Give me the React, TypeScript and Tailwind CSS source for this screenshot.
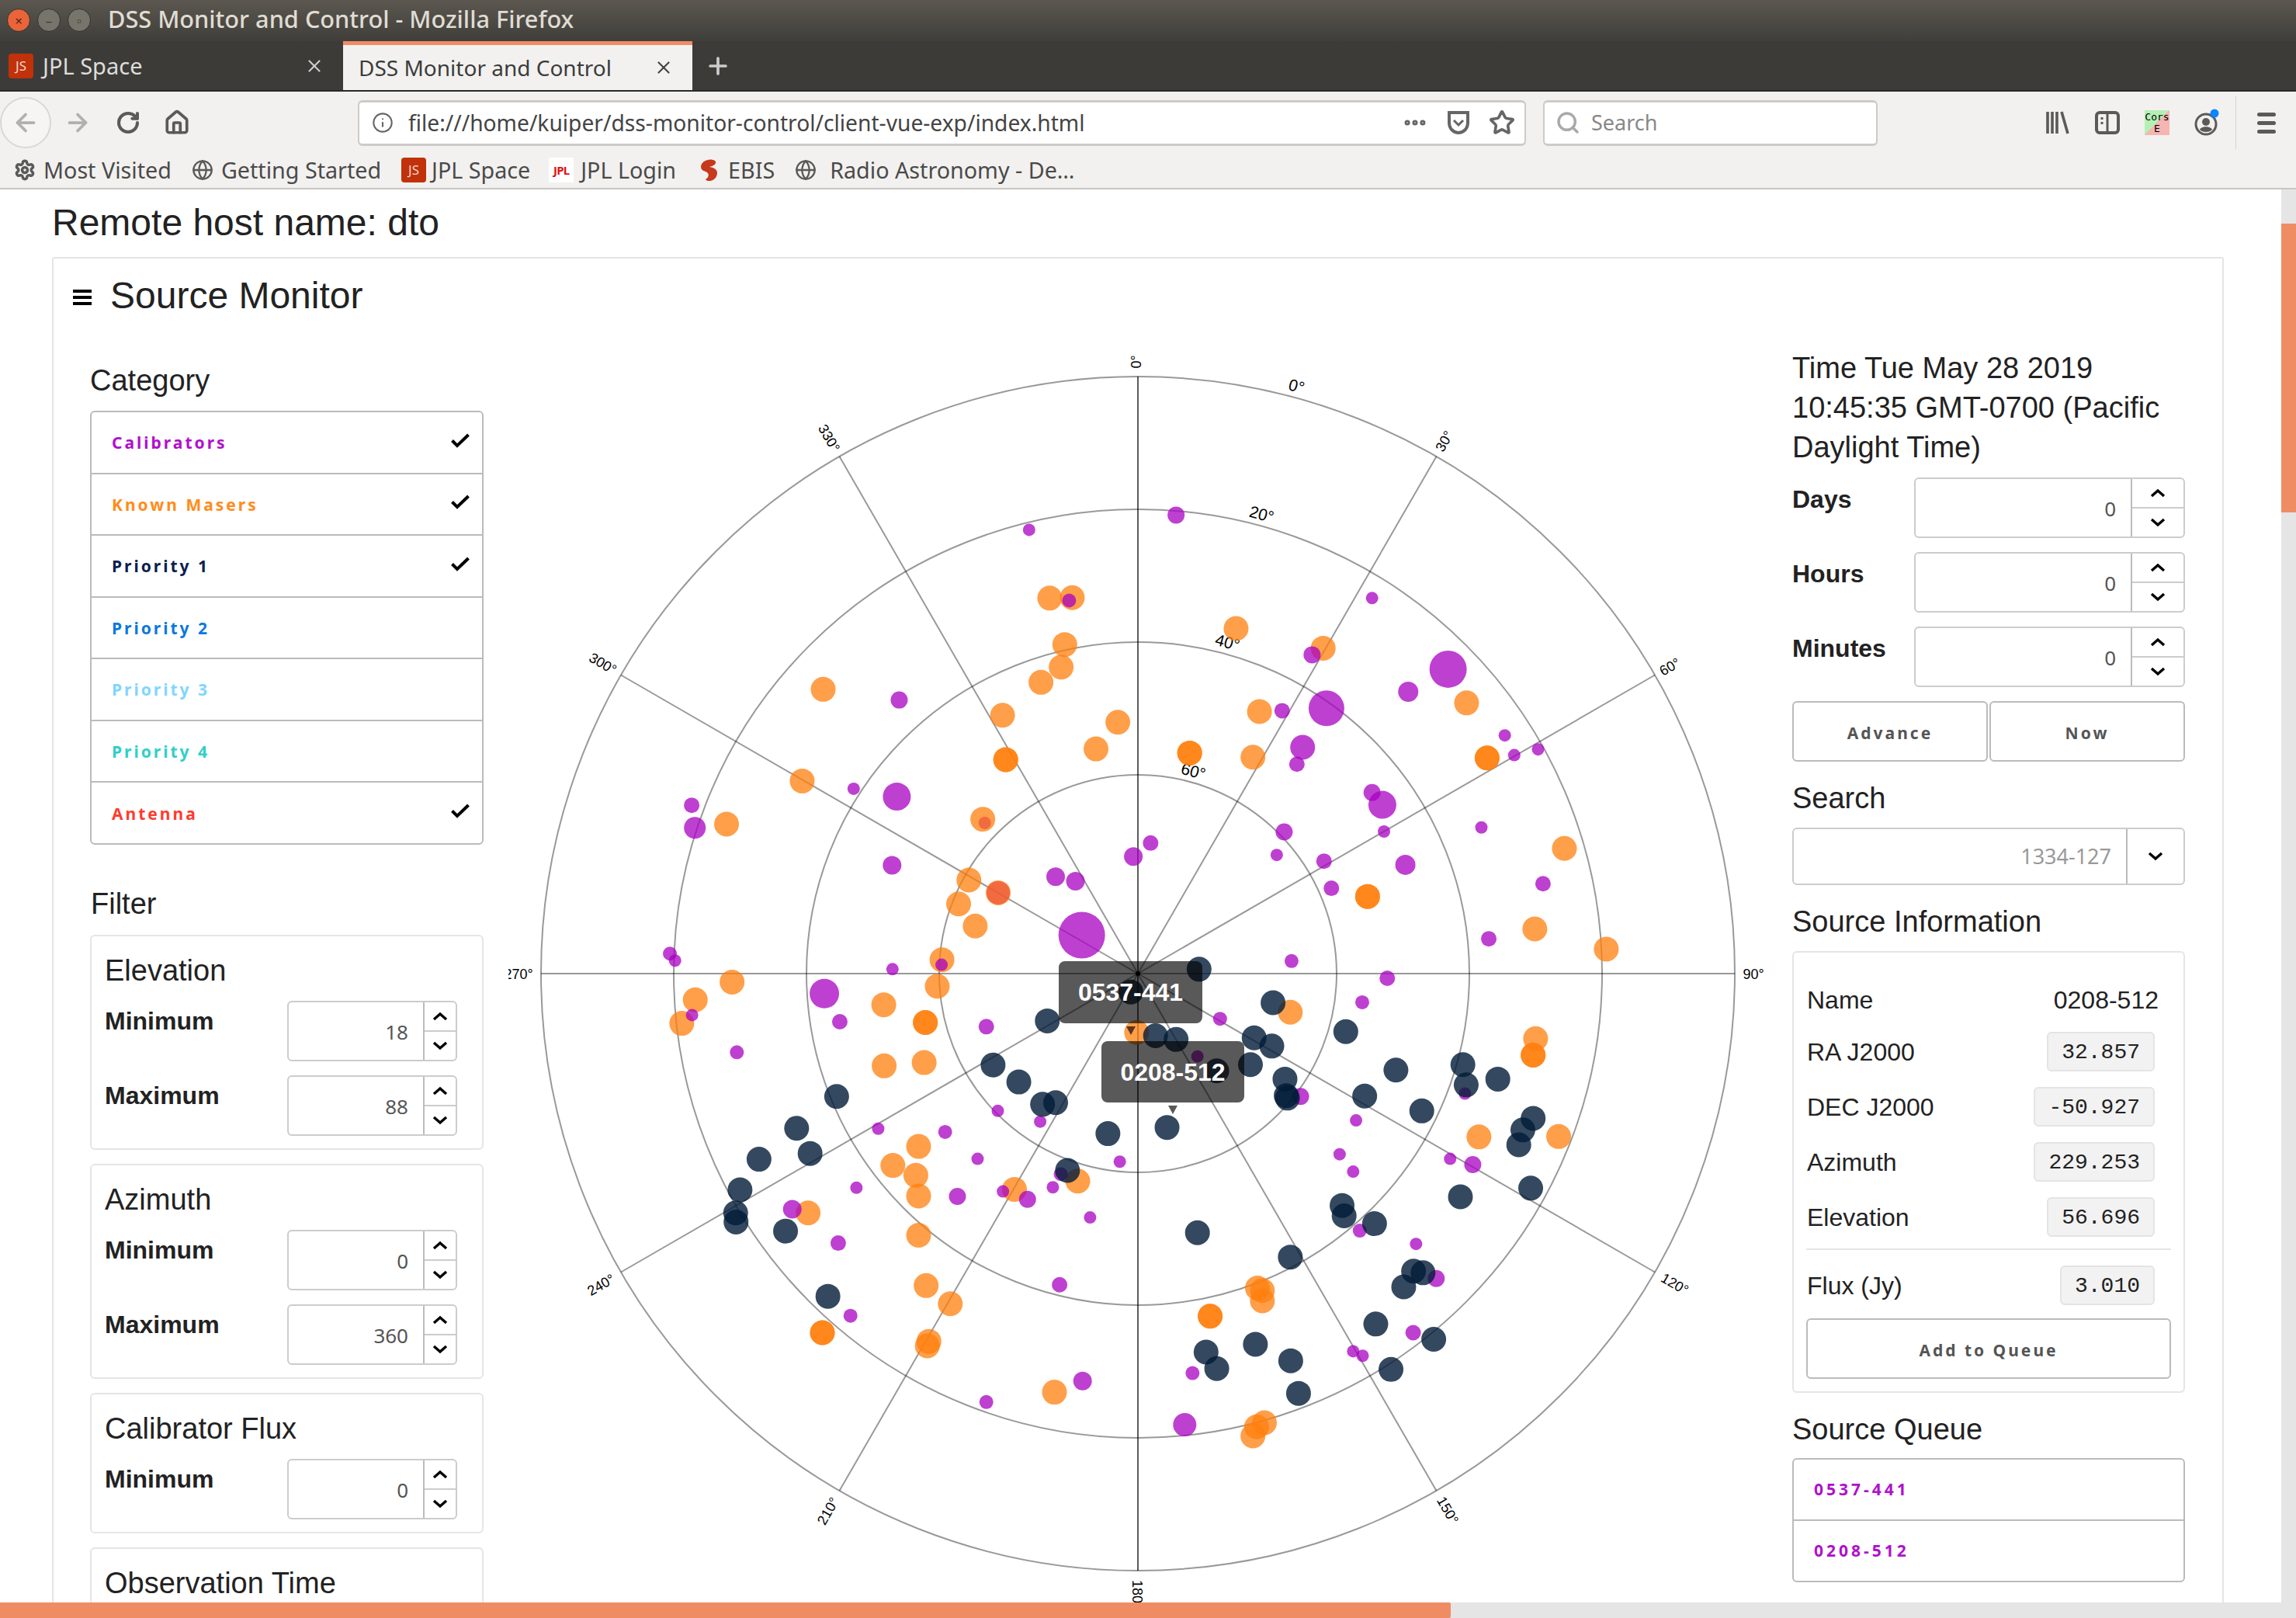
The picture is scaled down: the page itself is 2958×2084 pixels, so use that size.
import React from "react";
import { ArrowLeft, ArrowRight, Globe, Home, Info, MoreHorizontal, Plus, RotateCw, Search, Settings, Star, X } from "lucide-react";

type Dot = [number, number, number];

// dot lists were read off per quadrant, each one has its own origin and scale
const quad = (x0: number, y0: number, sx: number, sy: number, list: Dot[]): Dot[] =>
    list.map(([x, y, r]) => [x0 + x / sx, y0 + y / sy, r] as Dot);

const tl = (l: Dot[]) => quad(660, 440, 1.96, 1.889, l);
const tr = (l: Dot[]) => quad(1440, 440, 1.889, 1.889, l);
const bl = (l: Dot[]) => quad(660, 1250, 1.96, 1.88, l);
const br = (l: Dot[]) => quad(1440, 1250, 1.889, 1.88, l);

const o = (x: number, y: number): Dot => [x, y, 16];
const n = (x: number, y: number): Dot => [x, y, 16];

const orange: Dot[] = [
    ...tl([o(1357,624),o(1414,623),o(1395,737),o(1386,792),o(1335,829),o(1238,909),o(1529,926),o(1474,991),o(1246,1017),o(1246,1017),o(785,846),o(732,1069),o(1188,1162),o(541,1174),o(1153,1310),o(1227,1341),o(1127,1368),o(1169,1422),o(1085,1504)]),
    ...tr([o(288,698),o(500,746),o(849,879),o(345,900),o(175,1001),o(175,1001),o(329,1011),o(899,1013),o(899,1013),o(1087,1233),o(608,1350),o(608,1350),o(1015,1429),o(1189,1478)]),
    ...bl([o(555,28),o(462,71),o(428,128),o(938,83),o(1073,38),o(1043,126),o(1043,126),o(939,231),o(1040,223),o(1026,426),o(961,472),o(1019,496),o(1026,546),o(1268,530),o(1428,510),o(747,587),o(1026,641),o(1045,763),o(1106,807),o(783,877),o(783,877),o(1052,898),o(1048,909),o(1369,1021)]),
    ...br([o(420,101),o(46,150),o(1017,165),o(1011,205),o(1011,205),o(879,403),o(1073,402),o(340,769),o(352,800),o(352,775),o(225,837),o(225,837),o(357,1095),o(338,1105),o(329,1127)]),
];

const red: Dot[] = [
    ...tl([[1193,1171,8],[1227,1341,15]]),
];

const purple: Dot[] = [
    ...tl([[1305,458,8],[1406,630,9],[977,872,11],[862,1088,8],[971,1107,18],[453,1128,10],[461,1183,14],[959,1274,12],[1372,1302,12],[1422,1313,12],[1438,1444,30],[398,1489,9],[411,1506,8],[960,1527,8],[1084,1516,8]]),
    ...tr([[142,422,11],[619,624,8],[473,762,11],[804,797,24],[707,852,13],[400,898,10],[508,892,23],[942,958,8],[450,987,16],[965,1006,8],[1023,992,8],[436,1028,10],[619,1097,11],[644,1127,18],[405,1193,11],[885,1182,8],[648,1192,8],[80,1220,10],[38,1253,12],[387,1249,8],[502,1264,10],[700,1273,13],[1035,1319,10],[520,1330,10],[903,1453,10],[423,1507,9],[656,1549,10]]),
    ...bl([[788,56,19],[454,108,8],[827,124,10],[1197,136,10],[567,198,9],[924,383,8],[1226,340,8],[1333,366,8],[1093,391,9],[1175,456,8],[1534,463,8],[869,526,8],[1124,547,11],[1239,535,8],[1301,554,11],[1365,525,8],[1385,493,9],[707,578,12],[1459,598,8],[823,660,10],[1382,761,10],[854,836,9],[1440,994,12],[1197,1045,9]]),
    ...br([[249,117,9],[194,208,8],[445,305,11],[595,77,9],[580,363,8],[540,445,8],[573,487,8],[809,456,8],[864,470,11],[845,298,8],[726,662,8],[589,630,9],[775,746,11],[719,877,10],[573,922,8],[596,933,8],[182,975,9],[163,1100,15]]),
];

const navy: Dot[] = [
    ...tr([n(198,1527)]),
    ...bl([n(1351,122),n(1214,229),n(1279,270),n(1339,324),n(1372,320),n(819,305),n(1504,395),n(718,382),n(752,443),n(623,457),n(1402,484),n(575,531),n(564,587),n(565,609),n(690,631),n(797,789)]),
    ...br([n(32,52),n(92,158),n(142,167),n(378,78),n(332,163),n(375,183),n(323,228),n(407,263),n(410,303),n(413,309),n(241,243),n(555,148),n(677,241),n(601,304),n(740,340),n(840,228),n(848,277),n(925,263),n(1011,358),n(986,386),n(976,422),n(1005,527),n(834,548),n(120,380),n(546,569),n(551,594),n(625,613),n(194,635),n(420,694),n(720,728),n(743,732),n(696,766),n(628,856),n(769,893),n(665,966),n(335,905),n(215,924),n(241,964),n(421,945),n(440,1024)]),
];

const CX = 1466;
const CY = 1254;

const spokes = [0, 30, 60, 90, 120, 150, 180, 210, 240, 270, 300, 330];

const spokeLabels: [string, number, number, number][] = [
    ["0°", 1465, 466, -90],
    ["30°", 1862, 569, -60],
    ["60°", 2152, 860, -30],
    ["90°", 2259, 1256, 0],
    ["120°", 2157, 1655, 30],
    ["150°", 1864, 1946, 60],
    ["180", 1464, 2050, 90],
    ["210°", 1068, 1947, -60],
    ["240°", 775, 1656, -30],
    ["270°", 668, 1256, 0],
    ["300°", 776, 856, 30],
    ["330°", 1067, 565, 60],
];

const ringLabels: [string, number, number][] = [
    ["0°", 1670, 499],
    ["20°", 1625, 664],
    ["40°", 1581, 829],
    ["60°", 1537, 995],
];

function Dots({ list, fill, opacity }: { list: Dot[]; fill: string; opacity: number }) {
    return (
        <g fill={fill} fillOpacity={opacity}>
            {list.map(([x, y, r], i) => (
                <circle key={i} cx={x} cy={y} r={r} />
            ))}
        </g>
    );
}

function PolarChart() {
    return (
        <svg width="1620" height="1624" viewBox="655 440 1620 1624" className="shrink-0">
            <g fill="none" stroke="#000" strokeOpacity="0.4" strokeWidth="2">
                {[256, 427, 598, 769].map((r) => (
                    <circle key={r} cx={CX} cy={CY} r={r} />
                ))}
                {spokes.map((a) => (
                    <line
                        key={a}
                        x1={CX}
                        y1={CY}
                        x2={CX + 769 * Math.sin((a * Math.PI) / 180)}
                        y2={CY - 769 * Math.cos((a * Math.PI) / 180)}
                    />
                ))}
                <line x1={CX} y1={CY - 769} x2={CX} y2={CY + 769} />
            </g>
            {spokeLabels.map(([t, x, y, a]) => (
                <text key={t} transform={`translate(${x} ${y}) rotate(${a})`} textAnchor="middle" dominantBaseline="middle" fontSize="18" fill="#000">
                    {t}
                </text>
            ))}
            {ringLabels.map(([t, x, y]) => (
                <text key={t} transform={`translate(${x} ${y}) rotate(15)`} textAnchor="middle" dominantBaseline="middle" fontSize="21" fill="#000">
                    {t}
                </text>
            ))}
            <Dots list={orange} fill="#ff7f0e" opacity={0.75} />
            <Dots list={red} fill="#e8483a" opacity={0.6} />
            <Dots list={purple} fill="#a800c2" opacity={0.75} />
            <Dots list={navy} fill="#011b37" opacity={0.8} />
            <circle cx={CX} cy={CY} r="3" fill="#000" />
        </svg>
    );
}

function Tip({ text, className }: { text: string; className: string }) {
    return (
        <div className={"absolute flex items-center justify-center rounded-lg bg-[rgba(0,0,0,0.65)] text-[32px] font-bold text-white " + className}>
            {text}
            <div className="absolute left-1/2 top-full mt-[4px] -ml-[6px] h-0 w-0 border-x-[6px] border-t-[11px] border-x-transparent border-t-[rgba(0,0,0,0.65)]" />
        </div>
    );
}

function Chevron({ up }: { up?: boolean }) {
    return (
        <svg width="20" height="12" viewBox="0 0 20 12">
            <path d={up ? "M2 10L10 3L18 10" : "M2 2L10 9L18 2"} fill="none" stroke="#000" strokeWidth="3.4" />
        </svg>
    );
}

function NumberField({ value, className, spin }: { value: string; className: string; spin: string }) {
    return (
        <div className={"flex h-[78px] rounded-md border-2 border-[#cccccc] " + className}>
            <div className="flex flex-1 items-center justify-end pr-[19px] pt-[2px] font-['Noto_Sans',sans-serif] text-[26px] text-[#555555]">{value}</div>
            <div className={"flex flex-col border-l-2 border-[#bbbbbb] " + spin}>
                <div className="flex flex-1 items-center justify-center border-b-2 border-[#cccccc]">
                    <Chevron up />
                </div>
                <div className="flex flex-1 items-center justify-center">
                    <Chevron />
                </div>
            </div>
        </div>
    );
}

function FieldRow({ label, value }: { label: string; value: string }) {
    return (
        <div className="flex h-[78px]">
            <div className="w-[235px] text-[32px] font-bold leading-[52px]">{label}</div>
            <NumberField value={value} className="w-[219px]" spin="w-[42px]" />
        </div>
    );
}

function FilterBox({ title, children }: { title: string; children?: React.ReactNode }) {
    return (
        <div className="rounded-md border-2 border-[#e5e5e5] pb-[16px] pl-[17px] pr-[18px] pt-[18px]">
            <h3 className="mb-[12px] text-[38px] leading-[53px]">{title}</h3>
            <div className="flex flex-col gap-[18px]">{children}</div>
        </div>
    );
}

const categories = [
    { name: "Calibrators", color: "text-[#b010cc]", on: true },
    { name: "Known Masers", color: "text-[#ff8c1a]", on: true },
    { name: "Priority 1", color: "text-[#0a2050]", on: true },
    { name: "Priority 2", color: "text-[#0a78e0]", on: false },
    { name: "Priority 3", color: "text-[#7fd6ff]", on: false },
    { name: "Priority 4", color: "text-[#30cfc8]", on: false },
    { name: "Antenna", color: "text-[#ff3b30]", on: true },
];

const spaced = "font-['Noto_Sans',sans-serif] text-[21px] font-bold tracking-[3px]";

function LeftColumn() {
    return (
        <div className="w-[507px] shrink-0 pt-[24px]">
            <h3 className="mb-[12px] text-[38px] leading-[53px]">Category</h3>
            <div className="flex h-[559px] flex-col rounded-md border-2 border-[#bbbbbb]">
                {categories.map((c, i) => (
                    <div key={c.name} className={"flex flex-1 items-center justify-between pl-[26px] pr-[16px] " + (i > 0 ? "border-t-2 border-[#bbbbbb]" : "")}>
                        <span className={"pt-[2px] " + spaced + " " + c.color}>{c.name}</span>
                        {c.on && (
                            <svg width="24" height="20" viewBox="0 0 24 20" className="-mt-[6px]">
                                <path d="M1.5 10.5L8 17L22.5 3" fill="none" stroke="#000" strokeWidth="4" />
                            </svg>
                        )}
                    </div>
                ))}
            </div>
            <h3 className="mb-[13px] mt-[50px] pl-[1px] text-[38px] leading-[53px]">Filter</h3>
            <div className="flex flex-col gap-[18px]">
                <FilterBox title="Elevation">
                    <FieldRow label="Minimum" value="18" />
                    <FieldRow label="Maximum" value="88" />
                </FilterBox>
                <FilterBox title="Azimuth">
                    <FieldRow label="Minimum" value="0" />
                    <FieldRow label="Maximum" value="360" />
                </FilterBox>
                <FilterBox title="Calibrator Flux">
                    <FieldRow label="Minimum" value="0" />
                </FilterBox>
                <FilterBox title="Observation Time" />
            </div>
        </div>
    );
}

function InfoRow({ label, value }: { label: string; value: string }) {
    return (
        <div className="flex h-[51px] items-center justify-between pl-[1px] pr-[21px]">
            <span>{label}</span>
            <code className="flex h-[51px] items-center rounded-md border-2 border-[#e4e4e4] bg-[#f2f2f2] px-[17px] pt-[2px] font-['Liberation_Mono',monospace] text-[28px] text-[#222222]">{value}</code>
        </div>
    );
}

function TimeRow({ label }: { label: string }) {
    return (
        <div className="flex h-[78px]">
            <div className="w-[157px] text-[32px] font-bold leading-[56px]">{label}</div>
            <NumberField value="0" className="w-[349px]" spin="w-[68px]" />
        </div>
    );
}

const outlineBtn = "flex items-center justify-center rounded-md border-2 border-[#bbbbbb] pt-[6px] text-[#555555] " + spaced;

function RightColumn() {
    return (
        <div className="w-[506px] shrink-0 pt-[9px]">
            <div className="text-[38px] leading-[51px]">Time Tue May 28 2019 10:45:35 GMT-0700 (Pacific Daylight Time)</div>
            <div className="mt-[13px] flex flex-col gap-[18px]">
                <TimeRow label="Days" />
                <TimeRow label="Hours" />
                <TimeRow label="Minutes" />
                <div className="flex h-[78px] gap-[2px]">
                    <button className={"flex-1 " + outlineBtn}>Advance</button>
                    <button className={"flex-1 " + outlineBtn}>Now</button>
                </div>
            </div>
            <h3 className="mb-[11px] mt-[21px] text-[38px] leading-[53px]">Search</h3>
            <div className="flex h-[74px] rounded-md border-2 border-[#cccccc]">
                <div className="flex flex-1 items-center justify-end pr-[19px] font-['Noto_Sans',sans-serif] text-[27px] text-[#999999]">1334-127</div>
                <div className="flex w-[74px] items-center justify-center border-l-2 border-[#bbbbbb]">
                    <Chevron />
                </div>
            </div>
            <h3 className="mb-[11px] mt-[21px] text-[38px] leading-[53px]">Source Information</h3>
            <div className="rounded-md border-2 border-[#e5e5e5] px-[16px] pb-[16px] pt-[35px] text-[32px]">
                <div className="flex h-[51px] items-center justify-between pl-[1px] pr-[16px]">
                    <span>Name</span>
                    <span>0208-512</span>
                </div>
                <div className="mt-[16px] flex flex-col gap-[20px]">
                    <InfoRow label="RA J2000" value="32.857" />
                    <InfoRow label="DEC J2000" value="-50.927" />
                    <InfoRow label="Azimuth" value="229.253" />
                    <InfoRow label="Elevation" value="56.696" />
                </div>
                <div className="mb-[20px] mt-[15px] h-[2px] bg-[#e5e5e5]" />
                <InfoRow label="Flux (Jy)" value="3.010" />
                <button className={"mt-[17px] h-[78px] w-full " + outlineBtn}>Add to Queue</button>
            </div>
            <h3 className="mb-[10px] mt-[21px] text-[38px] leading-[53px]">Source Queue</h3>
            <div className="flex h-[160px] flex-col rounded-md border-2 border-[#bbbbbb]">
                <div className={"flex flex-1 items-center border-b-2 border-[#bbbbbb] pl-[26px] text-[#b010cc] " + spaced + " tracking-[4px]"}>0537-441</div>
                <div className={"flex flex-1 items-center pl-[26px] text-[#b010cc] " + spaced + " tracking-[4px]"}>0208-512</div>
            </div>
        </div>
    );
}

function WindowButton({ className, mark }: { className: string; mark: string }) {
    return (
        <div className={"flex h-[30px] w-[30px] items-center justify-center rounded-full border border-[#33322e] text-[17px] leading-none " + className}>{mark}</div>
    );
}

function JsIcon() {
    return (
        <div className="flex h-[32px] w-[32px] items-center justify-center rounded-[4px] bg-[#c1310a] text-[17px] text-[#f4d8cc]">JS</div>
    );
}

function Bookmark({ icon, label, className }: { icon: React.ReactNode; label: string; className: string }) {
    return (
        <div className={"flex items-center " + className}>
            {icon}
            <span>{label}</span>
        </div>
    );
}

function BrowserChrome() {
    return (
        <div className="shrink-0 font-['Noto_Sans',sans-serif]">
            <div className="flex h-[53px] items-center bg-gradient-to-b from-[#5c5850] to-[#3f3e3a] pb-[1px] pl-[9px]">
                <div className="flex gap-[9px]">
                    <WindowButton className="bg-[#e9643a] text-[#5a2010]" mark="×" />
                    <WindowButton className="bg-[#77746c] text-[#3a3a36]" mark="–" />
                    <WindowButton className="bg-[#77746c] text-[#3a3a36]" mark="▫" />
                </div>
                <span className="ml-[22px] pb-[3px] text-[30.7px] font-medium text-[#e0dcd3]">DSS Monitor and Control - Mozilla Firefox</span>
            </div>
            <div className="flex h-[65px] items-stretch border-b-2 border-[#2a2926] bg-[#3c3b37]">
                <div className="flex w-[442px] items-center pl-[11px] pr-[24px] text-[29px] text-[#dddddd]">
                    <JsIcon />
                    <span className="ml-[12px] flex-1">JPL Space</span>
                    <X size={26} strokeWidth={2} color="#cccccc" />
                </div>
                <div className="flex w-[450px] items-center border-t-[5px] border-[#f08c63] bg-[#f2f1ef] pl-[20px] pr-[24px] text-[28px] text-[#3c3c3c]">
                    <span className="flex-1">DSS Monitor and Control</span>
                    <X size={26} strokeWidth={2} color="#444444" />
                </div>
                <Plus size={34} strokeWidth={2.6} color="#cccccc" className="ml-[16px] self-center" />
            </div>
            <div className="flex h-[82px] items-center bg-[#f2f1ef] pb-[2px] pr-[26px]">
                <div className="flex h-[66px] w-[66px] shrink-0 items-center justify-center rounded-full border-2 border-[#d8d8d6] bg-[#f6f5f3]">
                    <ArrowLeft size={36} strokeWidth={2.5} color="#b0b0ae" />
                </div>
                <ArrowRight size={36} strokeWidth={2.5} color="#b0b0ae" className="ml-[16px] shrink-0" />
                <RotateCw size={32} strokeWidth={3} color="#5a5a5a" className="ml-[31px] shrink-0" />
                <Home size={34} strokeWidth={2.6} color="#5a5a5a" className="ml-[30px] shrink-0" />
                <div className="ml-[216px] flex h-[59px] w-[1505px] shrink-0 items-center rounded-md border-2 border-b-[3px] border-t-[3px] border-[#cdcbc7] bg-white pl-[16px] pr-[12px] text-[28.2px] text-[#444444]">
                    <Info size={28} color="#666666" strokeWidth={1.8} className="shrink-0" />
                    <span className="ml-[19px] flex-1">file:///home/kuiper/dss-monitor-control/client-vue-exp/index.html</span>
                    <MoreHorizontal size={34} color="#666666" strokeWidth={3} />
                    <svg width="30" height="32" viewBox="0 0 30 32" className="ml-[24px]">
                        <path d="M3 3H27V16C27 24 21 29 15 29C9 29 3 24 3 16Z" fill="none" stroke="#666666" strokeWidth="4" />
                        <path d="M9 13L15 19L21 13" fill="none" stroke="#666666" strokeWidth="3" />
                    </svg>
                    <Star size={34} color="#666666" strokeWidth={2.6} className="ml-[24px]" />
                </div>
                <div className="ml-[22px] flex h-[59px] w-[431px] shrink-0 items-center rounded-md border-2 border-b-[3px] border-t-[3px] border-[#cdcbc7] bg-white pl-[14px] text-[27px] text-[#888888]">
                    <Search size={32} color="#aaaaaa" strokeWidth={2.6} />
                    <span className="ml-[14px]">Search</span>
                </div>
                <div className="ml-auto flex items-center">
                    <svg width="32" height="30" viewBox="0 0 32 30">
                        <path d="M3 1V29M9 1V29M15 1V29M21 1L29 29" fill="none" stroke="#5a5a5a" strokeWidth="3.6" />
                    </svg>
                    <svg width="32" height="30" viewBox="0 0 32 30" className="ml-[32px]">
                        <rect x="2" y="2" width="28" height="26" rx="4" fill="none" stroke="#5a5a5a" strokeWidth="4" />
                        <path d="M16 2V28" stroke="#5a5a5a" strokeWidth="3" />
                        <path d="M9 8V11M9 14V17" stroke="#5a5a5a" strokeWidth="3" />
                    </svg>
                    <div className="ml-[32px] flex h-[32px] w-[32px] flex-col items-center justify-center bg-gradient-to-br from-[#b4f0b4] from-50% to-[#f5b5b0] to-50% font-['DejaVu_Sans_Mono',monospace] text-[13px] leading-[15px] text-black">
                        <span>Cors</span>
                        <span>E</span>
                    </div>
                    <svg width="36" height="36" viewBox="0 0 36 36" className="ml-[30px]">
                        <circle cx="17" cy="20" r="13" fill="none" stroke="#5a5a5a" strokeWidth="3" />
                        <circle cx="17" cy="17" r="5" fill="#5a5a5a" />
                        <path d="M9 27C11 22 23 22 25 27C22 31 12 31 9 27Z" fill="#5a5a5a" />
                        <circle cx="28" cy="6" r="5.5" fill="#0a84ff" />
                    </svg>
                    <div className="ml-[19px] h-[68px] w-[1px] bg-[#d4d2ce]" />
                    <div className="ml-[27px] flex flex-col gap-[6px]">
                        <div className="h-[5px] w-[24px] rounded-full bg-[#5a5a5a]" />
                        <div className="h-[5px] w-[24px] rounded-full bg-[#5a5a5a]" />
                        <div className="h-[5px] w-[24px] rounded-full bg-[#5a5a5a]" />
                    </div>
                </div>
            </div>
            <div className="flex h-[44px] items-center border-b-2 border-[#c8c6c2] bg-[#f2f1ef] pb-[4px] pl-[18px] text-[28.7px] text-[#4a4a4a]">
                <Bookmark className="gap-[10px]" icon={<Settings size={28} strokeWidth={3} color="#5a5a5a" />} label="Most Visited" />
                <Bookmark className="ml-[26px] gap-[10px]" icon={<Globe size={28} strokeWidth={2} color="#5a5a5a" />} label="Getting Started" />
                <Bookmark className="ml-[26px] gap-[7px]" icon={<JsIcon />} label="JPL Space" />
                <Bookmark
                    className="ml-[24px] gap-[9px]"
                    icon={<div className="flex h-[32px] w-[32px] items-center justify-center bg-white text-[15px] font-bold tracking-tighter text-[#e01010]">JPL</div>}
                    label="JPL Login"
                />
                <Bookmark
                    className="ml-[26px] gap-[9px]"
                    icon={
                        <svg width="32" height="32" viewBox="0 0 32 32">
                            <path d="M6 12C6 4 18 0 24 4C28 8 20 12 16 12C22 12 30 16 26 24C24 30 14 32 12 28C16 26 18 20 12 18C8 17 6 15 6 12Z" fill="#c6391c" />
                        </svg>
                    }
                    label="EBIS"
                />
                <Bookmark className="ml-[26px] gap-[17px]" icon={<Globe size={28} strokeWidth={2} color="#5a5a5a" />} label="Radio Astronomy - De…" />
            </div>
        </div>
    );
}

export default function App() {
    return (
        <div className="flex h-[2084px] w-[2958px] flex-col overflow-hidden bg-white font-['Liberation_Sans',sans-serif] text-[#222222]">
            <BrowserChrome />
            <div className="flex min-h-0 flex-1">
                <div className="min-w-0 flex-1 overflow-hidden pl-[67px] pr-[74px]">
                    <h1 className="pt-[13px] text-[48px] leading-[60px]">Remote host name: dto</h1>
                    <div className="mt-[14px] rounded-[3px] border-2 border-[#e5e5e5]">
                        <div className="flex h-[107px] items-start pl-[25px] pt-[18px]">
                            <div className="mt-[22px] flex w-[24px] flex-col gap-[4px]">
                                <div className="h-[4px] bg-black" />
                                <div className="h-[4px] bg-black" />
                                <div className="h-[4px] bg-black" />
                            </div>
                            <h2 className="ml-[24px] text-[48px] leading-[60px]">Source Monitor</h2>
                        </div>
                        <div className="flex pl-[47px]">
                            <LeftColumn />
                            <div className="relative ml-[32px] shrink-0">
                                <PolarChart />
                                <Tip text="0537-441" className="left-[709px] top-[798px] h-[80px] w-[185px]" />
                                <Tip text="0208-512" className="left-[764px] top-[901px] h-[79px] w-[184px]" />
                            </div>
                            <div className="ml-[34px]">
                                <RightColumn />
                            </div>
                        </div>
                    </div>
                </div>
                <div className="relative w-[19px] shrink-0 bg-[#e5e5e5]">
                    <div className="mt-[44px] h-[372px] bg-[#f08c63]" />
                </div>
            </div>
            <div className="h-[20px] shrink-0 bg-[#e5e5e5]">
                <div className="h-[20px] w-[1869px] rounded-r-[2px] bg-[#f08c63]" />
            </div>
        </div>
    );
}
